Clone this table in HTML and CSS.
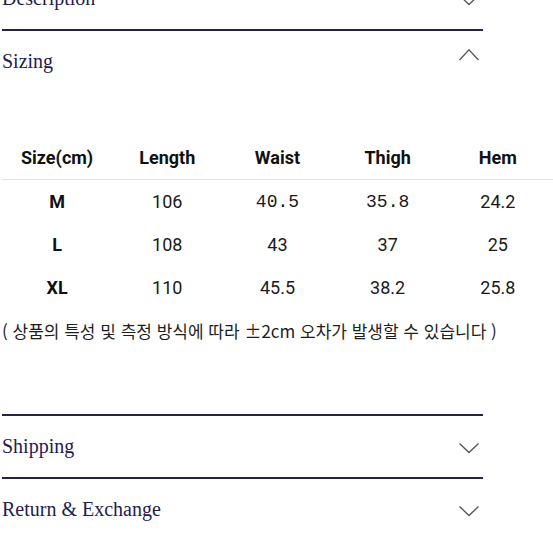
FILE: index.html
```
<!DOCTYPE html>
<html lang="ko">
<head>
<meta charset="utf-8">
<title>Sizing</title>
<link rel="stylesheet" href="styles.css">
</head>
<body>
<div class="accordion">
  <section class="item item-first">
    <div class="head">
      <span class="title">Description</span>
      <svg class="chev" width="20" height="20" viewBox="0 0 20 20"><polyline points="0.5,6.5 10,15.5 19.5,6.5" fill="none" stroke="#555" stroke-width="1.3"/></svg>
    </div>
  </section>
  <section class="item">
    <div class="head">
      <span class="title">Sizing</span>
      <svg class="chev chev-up" width="20" height="12" viewBox="0 0 20 12"><polyline points="0.5,11 10,0.8 19.5,11" fill="none" stroke="#555" stroke-width="1.3"/></svg>
    </div>
    <div class="panel">
      <table class="sizes">
        <thead>
          <tr><th>Size(cm)</th><th>Length</th><th>Waist</th><th>Thigh</th><th>Hem</th></tr>
        </thead>
        <tbody>
          <tr><td class="sz">M</td><td>106</td><td class="mono">40.5</td><td class="mono">35.8</td><td>24.2</td></tr>
          <tr><td class="sz">L</td><td>108</td><td>43</td><td>37</td><td>25</td></tr>
          <tr><td class="sz">XL</td><td>110</td><td>45.5</td><td>38.2</td><td>25.8</td></tr>
        </tbody>
      </table>
      <p class="note">( 상품의 특성 및 측정 방식에 따라 ±2cm 오차가 발생할 수 있습니다 )</p>
    </div>
  </section>
  <section class="item">
    <div class="head">
      <span class="title">Shipping</span>
      <svg class="chev" width="20" height="20" viewBox="0 0 20 20"><polyline points="0.5,6.5 10,15.5 19.5,6.5" fill="none" stroke="#555" stroke-width="1.3"/></svg>
    </div>
  </section>
  <section class="item item-last">
    <div class="head">
      <span class="title">Return &amp; Exchange</span>
      <svg class="chev" width="20" height="20" viewBox="0 0 20 20"><polyline points="0.5,6.5 10,15.5 19.5,6.5" fill="none" stroke="#555" stroke-width="1.3"/></svg>
    </div>
  </section>
</div>
</body>
</html>
```
FILE: styles.css
```
html, body {
  margin: 0;
  padding: 0;
  background: #fff;
}
body {
  overflow: hidden;
  height: 553px;
}
.accordion {
  width: 481px;
  margin-left: 2px;
}
.item {
  border-bottom: 2px solid #26214a;
}
.item-first {
  margin-top: -32px;
}
.item-last {
  border-bottom: none;
}
.head {
  height: 61px;
  display: flex;
  align-items: center;
  justify-content: space-between;
  padding-right: 4px;
}
.title {
  font-family: "Liberation Serif", "Times New Roman", serif;
  font-size: 20px;
  color: #231b52;
}
.chev {
  display: block;
  flex: none;
}
.chev-up {
  align-self: flex-start;
  margin-top: 18px;
}
.panel {
  width: 551px;
  padding-top: 43px;
  padding-bottom: 71px;
}
.sizes {
  width: 551px;
  table-layout: fixed;
  border-collapse: separate;
  border-spacing: 0;
  font-family: Roboto, "Noto Sans", sans-serif;
  font-size: 18px;
  color: #1a1a1a;
}
.sizes th {
  height: 44px;
  padding: 0;
  font-weight: 700;
  text-align: center;
  border-bottom: 1px solid #e4e4e4;
  color: #111;
}
.sizes td {
  height: 43px;
  padding: 0;
  text-align: center;
}
.sizes td.sz {
  font-weight: 700;
  color: #111;
}
.sizes td.mono {
  font-family: "Liberation Mono", "DejaVu Sans Mono", monospace;
  font-size: 18px;
}
.note {
  margin: 10px 0 0;
  font-family: "Noto Sans CJK KR", "Noto Sans", sans-serif;
  font-size: 17px;
  line-height: 24px;
  color: #1e1e1e;
}
```
